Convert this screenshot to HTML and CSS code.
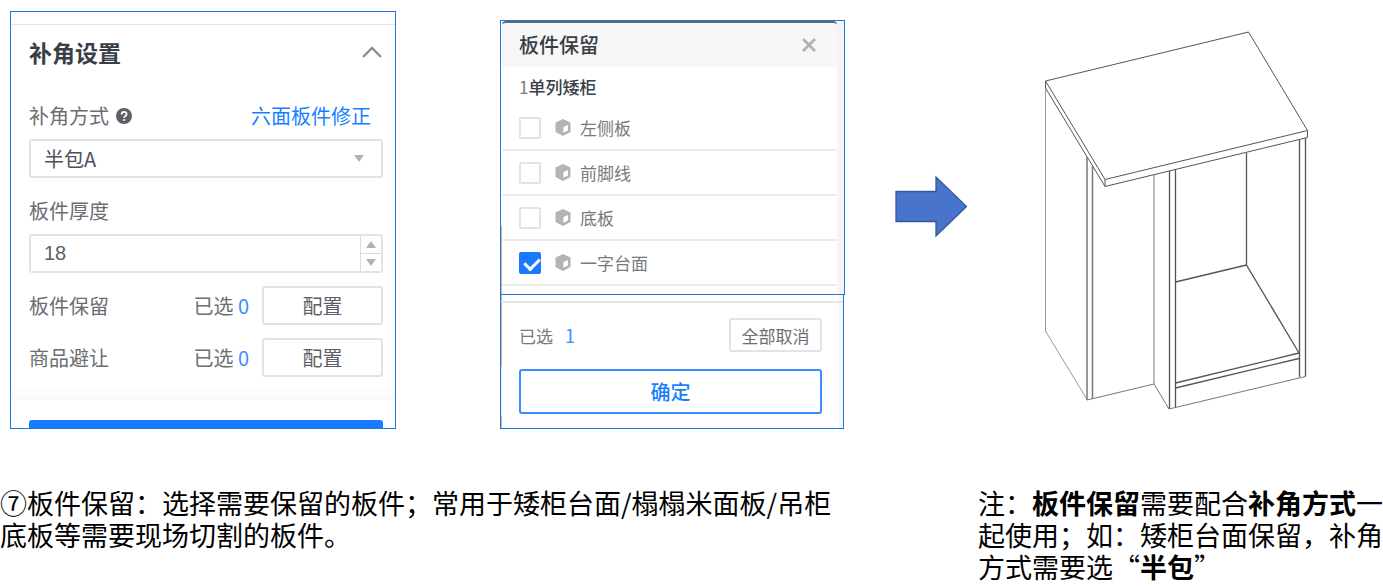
FILE: index.html
```
<!DOCTYPE html>
<html lang="zh-CN">
	<head>
		<meta charset="UTF-8">
		<title>板件保留</title>
		<link rel="stylesheet" href="styles.css">
	</head>
	<body>
		<svg class="defs" aria-hidden="true">
			<symbol id="cube" viewBox="0 0 16 17">
				<path fill="#b2b4b6" d="M8 0 L15.5 3.6 V13 L8 17 L0.5 13 V3.6 Z"/>
				<path fill="#fff" d="M8.4 8.1 L13 6 V11.5 L8.4 13.8 Z"/>
			</symbol>
		</svg>
		<div class="demo">
			<form class="settings">
				<div class="settings-head">
					<h2>补角设置</h2>
					<svg class="fold" viewBox="0 0 20 12"><path d="M1 11 L10 2 L19 11" fill="none" stroke="#8c8f93" stroke-width="2.4"/></svg>
				</div>
				<div class="settings-body">
					<div class="row">
						<label for="mode">补角方式</label>
						<svg class="help" viewBox="0 0 16 16">
							<circle cx="8" cy="8" r="8" fill="#5d6066"/>
							<path d="M5.6 6.4 C5.6 3.2 10.6 3.2 10.6 6.2 C10.6 8 8.2 7.9 8.2 9.8" fill="none" stroke="#fff" stroke-width="1.8"/>
							<circle cx="8.2" cy="12" r="1.1" fill="#fff"/>
						</svg>
						<a class="fix" href="#">六面板件修正</a>
					</div>
					<div class="select-box">
						<select id="mode">
							<option selected>半包A</option>
							<option>全包</option>
						</select>
					</div>
					<div class="row thick">
						<label for="thickness">板件厚度</label>
					</div>
					<div class="number-box">
						<input id="thickness" type="text" value="18">
						<div class="spin">
							<button type="button" class="up" aria-label="增加"></button>
							<button type="button" class="down" aria-label="减少"></button>
						</div>
					</div>
					<div class="config">
						<span class="name">板件保留</span>
						<span class="chosen">已选 <b>0</b></span>
						<button type="button">配置</button>
					</div>
					<div class="config">
						<span class="name">商品避让</span>
						<span class="chosen">已选 <b>0</b></span>
						<button type="button">配置</button>
					</div>
				</div>
				<div class="shade"></div>
				<div class="settings-foot">
					<button type="button" aria-label="生成"></button>
				</div>
			</form>

			<form class="keep">
				<div class="keep-top">
					<div class="keep-head">
						<h2>板件保留</h2>
						<button type="button" class="close" aria-label="关闭">
							<svg viewBox="0 0 14 14"><path d="M1 1 L13 13 M13 1 L1 13" stroke="#b0b2b4" stroke-width="2.8"/></svg>
						</button>
					</div>
					<h3><span>1</span>单列矮柜</h3>
					<ul>
						<li><label><input type="checkbox"><svg class="cube"><use href="#cube"/></svg>左侧板</label></li>
						<li><label><input type="checkbox"><svg class="cube"><use href="#cube"/></svg>前脚线</label></li>
						<li><label><input type="checkbox"><svg class="cube"><use href="#cube"/></svg>底板</label></li>
						<li><label><input type="checkbox" checked><svg class="cube"><use href="#cube"/></svg>一字台面</label></li>
					</ul>
				</div>
				<div class="keep-bottom">
					<div class="total">
						<span>已选<b>1</b></span>
						<button type="button" class="cancel">全部取消</button>
					</div>
					<button type="button" class="ok">确定</button>
				</div>
			</form>

			<svg class="arrow" viewBox="0 0 73 63">
				<path d="M1 16.5 H41 V2 L71.5 31.5 L41 61 V46.5 H1 Z" fill="#4874cb" stroke="#35579b" stroke-width="1.3"/>
			</svg>

			<!-- 柜体线框图 -->
			<svg class="cabinet" viewBox="1044 31 265 379" fill="none" stroke="#555" stroke-width="1">
				<path d="M1045.5 81 L1248.5 32 L1307.5 130.5 L1105 179.5 Z"/>
				<path d="M1045.5 81 V88 L1105 186.5 L1307.5 137.5 V130.5 M1105 179.5 V186.5"/>
				<path stroke="#999" d="M1045.5 88 V331 L1087 399.5"/>
				<path stroke="#777" stroke-width="1.5" d="M1087 157 V400 M1092.5 166 V399"/>
				<path stroke="#777" d="M1087 400 L1154 384 V174.5 M1154 384 L1169 409"/>
				<path stroke-width="1.3" d="M1169.5 171 V409 M1175.5 170 V408"/>
				<path stroke="#777" d="M1169 409 L1305.5 376.5"/>
				<path stroke-width="1.3" d="M1299.5 139.5 V377 M1305.5 138 V376.5"/>
				<path stroke-width="1.3" d="M1246.5 153 V265 L1299 353 M1246.5 265 L1175.5 282"/>
				<path stroke-width="1.3" d="M1175.5 383 L1299 353 M1175.5 388 L1299 358.5"/>
			</svg>
		</div>

		<div class="notes">
			<p class="desc">⑦板件保留：选择需要保留的板件；常用于矮柜台面/榻榻米面板/吊柜底板等需要现场切割的板件。</p>
			<p class="tip">注：<b>板件保留</b>需要配合<b>补角方式</b>一起使用；如：矮柜台面保留，补角方式需要选“<b>半包</b>”</p>
		</div>
	</body>
</html>
```
FILE: styles.css
```
*{
	box-sizing: border-box;
}
body, h2, h3, ul, p{
	margin: 0;
	padding: 0;
}
body{
	background: #fff;
	color: #000;
	font-family: "Noto Sans CJK SC", sans-serif;
	overflow-x: hidden;
}
li{
	list-style: none;
}
a{
	text-decoration: none;
}
button, input, select{
	margin: 0;
	padding: 0;
	font-family: inherit;
	background: #fff;
	outline: none;
}
b{
	font-weight: normal;
}
.defs{
	display: none;
}
.demo{
	display: flex;
	align-items: flex-start;
	padding: 11px 74px 0 10px;
}

/* 补角设置 */
.settings{
	flex: 384 1 0;
	border: 1px solid #1f78e0;
	padding-top: 12px;
	font-size: 20px;
	line-height: 26px;
	color: #6b6e73;
}
.settings-head{
	display: flex;
	align-items: center;
	justify-content: space-between;
	height: 55px;
	padding: 0 13px 0 18px;
	border-top: 1px solid #e4e4e4;
}
.settings-head h2{
	font-size: 23px;
	font-weight: bold;
	color: #3a3f47;
}
.fold{
	width: 20px;
	height: 12px;
}
.settings-body{
	padding: 24px 12px 8px 18px;
}
.row{
	display: flex;
	align-items: center;
	margin-bottom: 10px;
}
.thick{
	margin-top: 20px;
}
.help{
	width: 16px;
	height: 16px;
	margin-left: 7px;
}
.fix{
	margin-left: auto;
	margin-right: 12px;
	color: #1a7fff;
}
.select-box{
	position: relative;
}
.select-box select{
	display: block;
	width: 100%;
	height: 39px;
	padding-left: 13px;
	border: 2px solid #e2e3e4;
	border-radius: 3px;
	appearance: none;
	font-size: 20px;
	color: #4c5057;
}
.select-box::after{
	content: "";
	position: absolute;
	top: 16px;
	right: 19px;
	border: 5px solid transparent;
	border-top: 7px solid #b0b2b4;
	border-bottom: none;
}
.number-box{
	display: flex;
	height: 39px;
	border: 2px solid #e2e3e4;
	border-radius: 3px;
}
.number-box input{
	flex: 1;
	min-width: 0;
	padding-left: 13px;
	border: none;
	font-family: "Liberation Sans", sans-serif;
	font-size: 20px;
	color: #5c6066;
}
.spin{
	display: flex;
	flex-direction: column;
	width: 21px;
	border-left: 1px solid #dcdddf;
}
.spin button{
	display: flex;
	flex: 1;
	align-items: center;
	justify-content: center;
	border: none;
}
.spin .down{
	border-top: 1px solid #dcdddf;
}
.spin button::after{
	content: "";
	border: 5px solid transparent;
}
.spin .up::after{
	border-top: none;
	border-bottom: 7px solid #b0b2b4;
}
.spin .down::after{
	border-bottom: none;
	border-top: 7px solid #b0b2b4;
}
.config{
	display: flex;
	align-items: center;
	margin-top: 13px;
}
.chosen{
	margin-left: auto;
	margin-right: 13px;
}
.chosen b{
	color: #3b8cff;
}
.config button{
	width: 121px;
	height: 39px;
	border: 2px solid #e2e3e4;
	border-radius: 3px;
	font-size: 20px;
	color: #5c6066;
}
.shade{
	height: 15px;
	background: linear-gradient(#fff, #f9f9f9);
}
.settings-foot{
	height: 28px;
	padding: 20px 12px 0 18px;
	overflow: hidden;
}
.settings-foot button{
	display: block;
	width: 100%;
	height: 40px;
	border: none;
	border-radius: 3px;
	background: #1a7aff;
}

/* 板件保留 */
.keep{
	flex: 345 1 0;
	margin: 9px 0 0 104px;
	font-size: 17px;
	line-height: 24px;
	color: #777a7e;
}
.keep-top{
	padding-bottom: 8px;
	border: 1px solid #1f78e0;
	padding-right: 7px;
	padding-left: 1px;
	background: linear-gradient(#f5f5f5, #f5f5f5) right / 7px 100% no-repeat, linear-gradient(#fff 75%, #d3b598 75%) left / 1px 100% no-repeat;
}
.keep-head{
	display: flex;
	align-items: center;
	justify-content: space-between;
	height: 46px;
	padding: 0 21px 0 17px;
	border-top: 2px solid #62676e;
	border-radius: 4px 4px 0 0;
	background: #f7f7f7;
}
.keep-head h2{
	font-size: 20px;
	font-weight: 500;
	color: #3a3f47;
}
.close{
	width: 14px;
	height: 14px;
	border: none;
	background: none;
}
.close svg{
	display: block;
}
.keep h3{
	padding: 8px 0 7px 17px;
	font-size: 17px;
	font-weight: 500;
	color: #3a3f47;
}
.keep h3 span{
	font-weight: normal;
	color: #777a7e;
}
.keep li{
	border-bottom: 2px solid #ececec;
}
.keep li label{
	display: flex;
	align-items: center;
	height: 43px;
	padding-left: 17px;
}
.keep li input{
	width: 22px;
	height: 22px;
	border: 2px solid #e2e3e4;
	border-radius: 2px;
	appearance: none;
}
.keep li input:checked{
	border-color: #1a7aff;
	background: #1a7aff;
}
.keep li input:checked::after{
	content: "";
	display: block;
	width: 7px;
	height: 12px;
	margin: 1px 0 0 6px;
	border: solid #fff;
	border-width: 0 3px 3px 0;
	transform: rotate(45deg);
}
.cube{
	width: 16px;
	height: 17px;
	margin: 0 9px 0 14px;
}
.keep-bottom{
	margin-right: 1px;
	padding: 6px 21px 14px 18px;
	border: 1px solid #1f78e0;
	border-top: none;
	background: linear-gradient(#e6e6e6, #e6e6e6) 0 6px / 100% 2px no-repeat, linear-gradient(#f5f5f5, #f5f5f5) right / 4px 100% no-repeat, linear-gradient(#d3b598 54%, #eee 54%, #eee 91%, #d3b598 91%) left / 1px 100% no-repeat;
}
.total{
	display: flex;
	align-items: center;
	justify-content: space-between;
	padding: 17px 0;
}
.total b{
	margin-left: 12px;
	font-size: 18px;
	color: #3b8cff;
}
.cancel{
	width: 93px;
	height: 34px;
	border: 2px solid #e2e3e4;
	border-radius: 3px;
	font-size: 17px;
	color: #6b6e73;
}
.ok{
	display: block;
	width: 100%;
	height: 45px;
	border: 2px solid #3b8cff;
	border-radius: 3px;
	font-size: 20px;
	font-weight: 500;
	color: #1a7fff;
}

.arrow{
	flex: 73 1 0;
	margin: 164px 0 0 50px;
}
.cabinet{
	flex: 265 1 0;
	margin: 20px 0 0 76px;
}

/* 说明文字 */
.notes{
	display: flex;
	justify-content: space-between;
	margin-top: 58px;
	font-size: 27px;
	line-height: 32px;
}
.desc{
	flex: 0 1 840px;
}
.tip{
	flex: 0 0 405px;
}
.tip b{
	font-weight: bold;
}
```
